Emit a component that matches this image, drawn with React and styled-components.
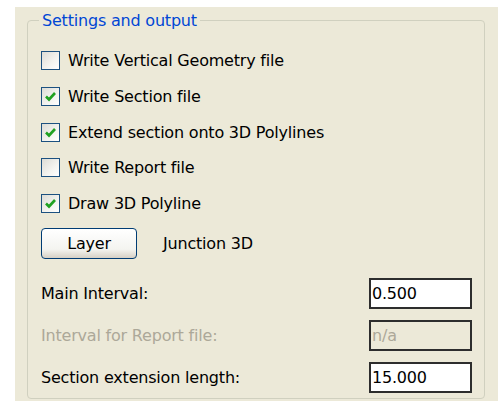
import React from "react";
import styled, { createGlobalStyle } from "styled-components";

const GlobalStyle = createGlobalStyle`
  html, body {
    margin: 0;
    padding: 0;
    background: #ffffff;
  }
  body {
    font-family: "DejaVu Sans", Tahoma, sans-serif;
    font-size: 16px;
    letter-spacing: -0.2px;
    color: #000000;
  }
`;

const options = [
  { label: "Write Vertical Geometry file", checked: false },
  { label: "Write Section file", checked: true },
  { label: "Extend section onto 3D Polylines", checked: true },
  { label: "Write Report file", checked: false },
  { label: "Draw 3D Polyline", checked: true },
];

const fields = [
  { label: "Main Interval:", value: "0.500" },
  { label: "Interval for Report file:", value: "n/a", disabled: true },
  { label: "Section extension length:", value: "15.000" },
];

export default function App() {
  return (
    <>
      <GlobalStyle />
      <Panel>
        <Group>
          <Legend>Settings and output</Legend>
          <CheckList>
            {options.map((o) => (
              <CheckRow key={o.label}>
                <Box>{o.checked && <Tick />}</Box>
                <span>{o.label}</span>
              </CheckRow>
            ))}
          </CheckList>
          <LayerRow>
            <Button>Layer</Button>
            <span>Junction 3D</span>
          </LayerRow>
          <Fields>
            {fields.map((f) => (
              <FieldRow key={f.label}>
                <FieldLabel $disabled={f.disabled}>{f.label}</FieldLabel>
                <Input $disabled={f.disabled}>{f.value}</Input>
              </FieldRow>
            ))}
          </Fields>
        </Group>
      </Panel>
    </>
  );
}

function Tick() {
  return (
    <svg width="13" height="13" viewBox="0 0 13 13">
      <path
        d="M2 6.5 L5 9.5 L11 3"
        fill="none"
        stroke="#21a121"
        strokeWidth="2.6"
      />
    </svg>
  );
}

const Panel = styled.div`
  margin: 7px 0 0 15px;
  height: 394px;
  background: #ece9d8;
  padding: 4px 13px 0 12px;
  box-sizing: border-box;
`;

const Group = styled.fieldset`
  margin: 0;
  padding: 0 12px 3px 13px;
  border: 1px solid #d0d0bf;
  border-radius: 4px;
  min-width: 0;
  height: 388px;
  box-sizing: border-box;
`;

const Legend = styled.legend`
  color: #0046d5;
  padding: 0 3px;
  margin-left: -2px;
  line-height: 18px;
  transform: translateY(1px);
`;

const CheckList = styled.div`
  display: flex;
  flex-direction: column;
  padding-top: 14px;
`;

const CheckRow = styled.div`
  display: flex;
  align-items: center;
  gap: 8px;
  height: 35.7px;
`;

const Box = styled.div`
  width: 17px;
  height: 17px;
  border: 1px solid #1c5180;
  background: linear-gradient(135deg, #dcdcd6 0%, #f4f4f0 60%, #ffffff 100%);
  display: flex;
  align-items: center;
  justify-content: center;
`;

const LayerRow = styled.div`
  display: flex;
  align-items: center;
  gap: 26px;
  margin-top: 7px;
`;

const Button = styled.div`
  width: 94px;
  height: 29px;
  border: 1px solid #003c74;
  border-radius: 4px;
  background: linear-gradient(180deg, #ffffff 0%, #f4f4f0 70%, #d6d0c5 100%);
  display: flex;
  align-items: center;
  justify-content: center;
`;

const Fields = styled.div`
  display: flex;
  flex-direction: column;
  gap: 11px;
  margin-top: 19px;
`;

const FieldRow = styled.div`
  display: flex;
  align-items: center;
  justify-content: space-between;
`;

const FieldLabel = styled.span`
  color: ${(p) => (p.$disabled ? "#aca899" : "#000000")};
`;

const Input = styled.div`
  width: 98px;
  height: 27px;
  border: 2px solid #2d2d2d;
  background: ${(p) => (p.$disabled ? "#ece9d8" : "#ffffff")};
  color: ${(p) => (p.$disabled ? "#aca899" : "#000000")};
  display: flex;
  align-items: center;
  padding-left: 1px;
  box-sizing: content-box;
`;
